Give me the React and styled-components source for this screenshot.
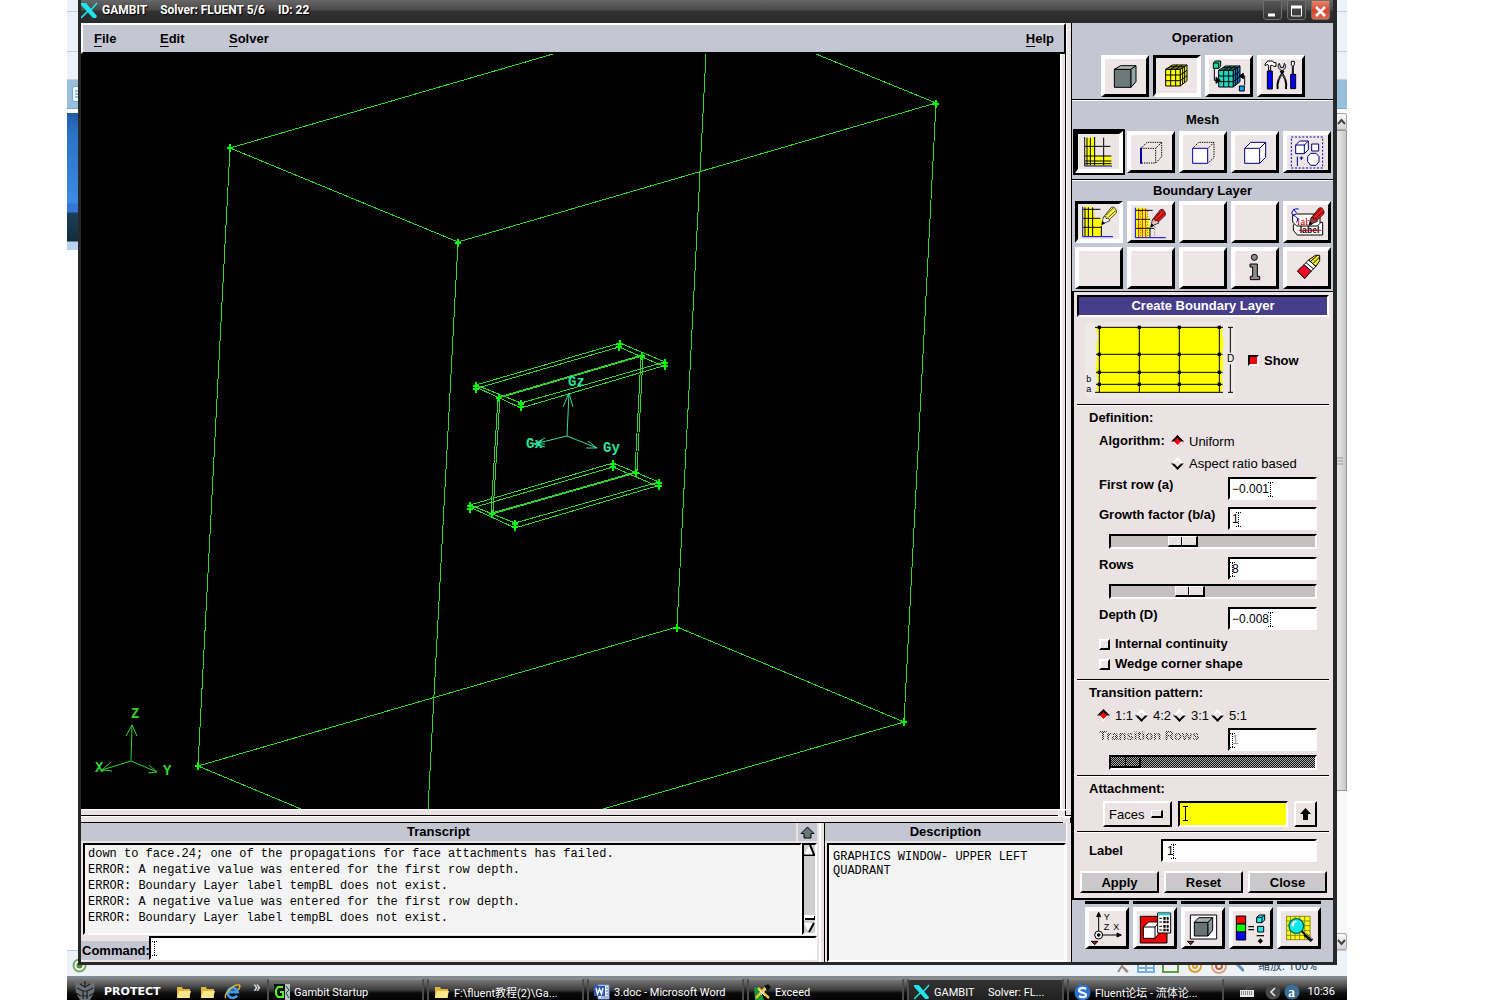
import React from 'react';
import styled, { createGlobalStyle, css } from 'styled-components';

const panel = '#c4c6d2';
const pink = '#ebe3e3';
const uiFont = '"Liberation Sans", Arial, sans-serif';
const monoFont = '"Liberation Mono", "Courier New", monospace';
const shellFont = 'Roboto, "Noto Sans CJK SC", sans-serif';

const GlobalStyle = createGlobalStyle`
  * { box-sizing: border-box; }
  body { margin: 0; background: #fff; overflow: hidden; }
  button, input, select { font: inherit; color: inherit; margin: 0; padding: 0; border-radius: 0; outline: none; }
  svg { display: block; flex: none; }
`;

const raised = css`
  border-style: solid;
  border-color: #fff #000 #000 #fff;
`;
const sunken = css`
  border-style: solid;
  border-color: #000 #fff #fff #000;
`;

const Desktop = styled.div`
  position: relative;
  display: flex;
  flex-direction: column;
  height: 100vh;
  margin: 0 153px 0 67px;
  overflow: hidden;
  font-family: ${uiFont};
  font-size: 13px;
  color: #000;
`;

/* browser window lying behind */
const Backdrop = styled.div`
  position: absolute;
  inset: 0 0 24px 0;
  display: flex;
  flex-direction: column;
  background: #fff;
`;
const BackToolbar = styled.div`
  height: ${({ $h }) => $h}px;
  background: #ecf2f7;
  border-bottom: 1px solid #c3d3de;
`;
const BackTabs = styled.div`
  display: flex;
  justify-content: flex-start;
  align-items: center;
  height: 29px;
  padding-left: 5px;
  background: #98c0db;
  border-bottom: 1px solid #7ba5c4;
`;
const BackPage = styled.div`
  flex: 1;
  display: flex;
  justify-content: space-between;
  padding-top: 4px;
`;
const BackBanner = styled.div`
  width: 60px;
  height: 137px;
  background: linear-gradient(#1f5ba6 0, #2a72c4 20px, #3c8ae4 90px, #3676d6 91px, #3676d6 99px, #1c4058 100px, #142c3c 128px, #b8d2f2 129px);
`;
const BackScroll = styled.div`
  display: flex;
  flex-direction: column;
  width: 17px;
  background: #f8f8f8;
`;
const BackScrollButton = styled.div`
  display: flex;
  justify-content: flex-end;
  align-items: center;
  height: 17px;
  border: 1px solid #a8a8a8;
  border-radius: 2px;
  background: linear-gradient(#fafafa, #d4d4d4);
`;
const BackThumb = styled.div`
  display: flex;
  justify-content: flex-end;
  align-items: center;
  height: 661px;
  border: 1px solid #989898;
  background: linear-gradient(90deg, #f4f4f4, #dedede 60%, #c8c8c8);
`;
const BackTrack = styled.div`
  flex: 1;
`;
const BackStatus = styled.div`
  display: flex;
  justify-content: space-between;
  align-items: center;
  height: 26px;
  padding: 4px 30px 0 5px;
  border-top: 1px solid #b5cbe0;
  background: #ecf2f6;
`;
const BackZoom = styled.div`
  display: flex;
  align-items: center;
  gap: 14px;
  font-family: ${shellFont};
  font-size: 12px;
  line-height: 16px;
  color: #1c4866;
`;

const Window = styled.main`
  position: relative;
  flex: 1;
  min-height: 0;
  display: flex;
  flex-direction: column;
  margin: 0 10px 11px 11px;
  border: solid #26282a;
  border-width: 0 4px 3px 3px;
  background: ${pink};
`;
const TitleBar = styled.header`
  display: flex;
  align-items: center;
  height: 23px;
  padding: 0 3px 3px 0;
  background: linear-gradient(#666 0, #4a4a4a 10px, #323232 11px, #2a2a2a 22px);
  font-family: ${shellFont};
  font-size: 12px;
  font-weight: 700;
  color: #fff;
  text-shadow: 1px 1px 1px #000;
`;
const TitleText = styled.div`
  display: flex;
  flex: 1;
  gap: 13px;
  padding-left: 4px;
  line-height: 20px;
`;
const CaptionButton = styled.button`
  width: 19px;
  height: 20px;
  margin-left: 5px;
  border: 1px solid #6e6e6e;
  border-radius: 0 0 3px 3px;
  background: ${({ $close }) => ($close ? 'linear-gradient(#e88870, #d4452c 50%, #e06848)' : 'linear-gradient(#555, #333)')};
`;
const Client = styled.div`
  flex: 1;
  min-height: 0;
  display: flex;
`;
const Work = styled.div`
  flex: 1;
  min-width: 0;
  display: flex;
  flex-direction: column;
  border-right: 1px solid #000;
`;
const WorkRow = styled.div`
  display: flex;
  ${({ $grow }) => $grow && 'flex: 1; min-height: 0;'}
`;
const Gutter = styled.div`
  width: 5px;
  border-left: 1px solid #fff;
  background: ${pink};
`;
const MenuBar = styled.nav`
  flex: 1;
  display: flex;
  align-items: center;
  height: 31px;
  padding: 0 10px 0 11px;
  border-width: 2px;
  ${sunken}
  border-color: #fff #000 #000 #fff;
  background: ${panel};
  font-weight: 700;
`;
const MenuItem = styled.button`
  border: 0;
  background: none;
  font-weight: 700;
  text-align: left;
  line-height: 18px;
  u { text-underline-offset: 3px; }
  ${({ $w }) => ($w ? `width: ${$w}px;` : 'margin-left: auto;')}
`;
const View = styled.div`
  flex: 1;
  min-width: 0;
  background: #000;
  svg { width: 100%; height: 100%; }
`;
const VSash = styled.div`
  width: 6px;
  border-left: 2px solid #fff;
  border-right: 1px solid #000;
  background: ${pink};
`;
const HSash = styled.div`
  display: flex;
  justify-content: flex-end;
  height: 7px;
  padding-right: ${({ $end }) => $end}px;
  border-top: 1px solid #fff;
  border-bottom: 1px solid #000;
  background: ${pink};
`;
const SashGrip = styled.div`
  width: 8px;
  height: 7px;
  border-width: 1px;
  ${raised}
  background: ${pink};
`;
const Bottom = styled.div`
  display: grid;
  grid-template-columns: 1fr 6px 241px 5px;
  height: 139px;
`;
const Pane = styled.section`
  display: flex;
  flex-direction: column;
  min-width: 0;
`;
const PaneHead = styled.div`
  display: flex;
  height: 20px;
  padding-bottom: 2px;
`;
const PaneTitle = styled.h2`
  flex: 1;
  margin: 0;
  background: ${panel};
  font-size: 13px;
  line-height: 18px;
  text-align: center;
`;
const HeadButton = styled.button`
  display: flex;
  justify-content: center;
  align-items: center;
  width: 19px;
  height: 18px;
  margin: 0 2px;
  border: 0;
  background: ${panel};
`;
const TextBox = styled.div`
  flex: 1;
  min-height: 0;
  overflow: hidden;
  margin-left: 2px;
  padding: ${({ $pad }) => $pad};
  border-width: 2px;
  ${sunken}
  background: #f4f4f4;
  font-family: ${monoFont};
  font-size: 12px;
  line-height: ${({ $line }) => $line}px;
  p { margin: 0; }
`;
const Log = styled.div`
  flex: 1;
  min-height: 0;
  display: flex;
  padding-bottom: 1px;
`;
const LogScroll = styled.div`
  display: flex;
  flex-direction: column;
  justify-content: space-between;
  width: 15px;
  margin-right: 2px;
  border-width: 2px;
  ${sunken}
  background: #cfcfcf;
`;
const CommandRow = styled.div`
  display: flex;
  height: 26px;
  padding: 0 2px 2px 0;
  label {
    flex: none;
    align-self: flex-end;
    width: 68px;
    padding-left: 1px;
    background: ${panel};
    font-weight: 700;
    line-height: 19px;
  }
`;

const Side = styled.aside`
  display: flex;
  flex-direction: column;
  width: 261px;
  background: ${panel};
`;
const Group = styled.section`
  border-bottom: ${({ $last }) => ($last ? 0 : 1)}px solid #000;
  border-top: ${({ $first }) => ($first ? 0 : 1)}px solid #fff;
  padding-bottom: ${({ $pad }) => $pad}px;
  h2 {
    margin: 0;
    padding-top: ${({ $top }) => $top}px;
    font-size: 13px;
    line-height: 20px;
    text-align: center;
  }
`;
const Tools = styled.div`
  display: flex;
  justify-content: center;
  align-items: center;
  gap: 4px;
  padding-top: ${({ $top }) => $top || 0}px;
`;
const Tool = styled.button`
  width: ${({ $small }) => ($small ? 44 : 48)}px;
  height: 42px;
  border-width: ${({ $on }) => ($on ? '3px 4px 4px 3px' : '4px 3px 3px 4px')};
  ${({ $on }) => ($on ? sunken : raised)}
  background: #eee6e6;
`;
const Ring = styled.div`
  margin: -2px;
  border: 2px solid #000;
`;
const Form = styled.form`
  display: flex;
  flex-direction: column;
  padding: 3px 4px 5px 3px;
  border: solid #000;
  border-width: 1px 0 2px 2px;
  background: ${pink};
`;
const FormTitle = styled.h2`
  margin: 0;
  border-width: 2px;
  ${sunken}
  background: #483d8b;
  color: #fff;
  font-size: 13px;
  line-height: 18px;
  text-align: center;
`;
const Preview = styled.div`
  display: flex;
  align-items: center;
  height: 87px;
  padding: 0 8px;
  gap: 13px;
`;
const Rule = styled.hr`
  width: 100%;
  height: 2px;
  margin: 0;
  border: 0;
  border-top: 1px solid #000;
  border-bottom: 1px solid #fff;
`;
const Heading = styled.h3`
  margin: 0;
  padding-left: 12px;
  font-size: 13px;
  line-height: 24px;
`;
const Row = styled.div`
  display: flex;
  align-items: ${({ $align }) => $align || 'center'};
  justify-content: space-between;
  height: ${({ $h }) => $h}px;
  padding: 0 12px 0 ${({ $left }) => ($left === undefined ? 22 : $left)}px;
`;
const FieldLabel = styled.label`
  font-weight: 700;
  line-height: 22px;
  white-space: nowrap;
  ${({ $off }) => $off && css`
    color: transparent;
    background: repeating-conic-gradient(#222 0 25%, ${pink} 0 50%) 0 0 / 2px 2px;
    background-clip: text;
  `}
`;
const FieldBox = styled.div`
  position: relative;
  display: flex;
  width: ${({ $w }) => ($w ? `${$w}px` : '100%')};
  height: ${({ $h }) => $h || 23}px;
  margin-top: ${({ $top }) => $top || 0}px;
  border-width: 2px;
  ${sunken}
  background: ${({ $bg }) => $bg || '#fff'};
  input {
    width: 100%;
    min-width: 0;
    padding-left: ${({ $pad }) => ($pad === undefined ? 2 : $pad)}px;
    border: 0;
    background: none;
    font-size: 12px;
  }
  input:disabled { color: #999; }
`;
const Caret = styled.svg`
  position: absolute;
  top: 3px;
  left: ${({ $x }) => $x}px;
`;
const Radios = styled.div`
  display: flex;
  gap: 5px;
`;
const RadioLabel = styled.label`
  display: flex;
  align-items: center;
  gap: 7px;
  width: ${({ $w }) => $w}px;
  white-space: nowrap;
`;
const Radio = styled.input.attrs({ type: 'radio' })`
  appearance: none;
  flex: none;
  width: 9px;
  height: 9px;
  border-width: 2px;
  ${raised}
  transform: rotate(45deg);
  &:checked {
    border-color: #000 #fff #fff #000;
    background: #f00;
  }
`;
const CheckLabel = styled.label`
  display: flex;
  align-items: center;
  gap: 5px;
  font-weight: 700;
  line-height: 20px;
`;
const Check = styled.input.attrs({ type: 'checkbox' })`
  appearance: none;
  width: 11px;
  height: 11px;
  border-width: 2px;
  ${raised}
  &:checked {
    border-color: #000 #fff #fff #000;
    background: #f00;
  }
`;
const thumb = css`
  width: 30px;
  height: 11px;
  border: solid;
  border-width: 1px 2px 2px 1px;
  border-color: #fff #000 #000 #fff;
  border-radius: 0;
`;
const Slider = styled.input.attrs({ type: 'range' })`
  appearance: none;
  width: 100%;
  height: 15px;
  border-width: 2px;
  ${sunken}
  background: #c6bfbf;
  &::-webkit-slider-thumb {
    appearance: none;
    ${thumb}
    background: linear-gradient(90deg, ${pink} 12px, #000 12px, #000 13px, #fff 13px, #fff 14px, ${pink} 14px);
  }
  &:disabled {
    background: repeating-conic-gradient(#111 0 25%, #aaa 0 50%) 0 0 / 2px 2px;
  }
  &:disabled::-webkit-slider-thumb {
    border-color: transparent #000 #000 transparent;
    background: linear-gradient(90deg, transparent 13px, #000 13px, #000 14px, transparent 14px);
  }
`;
const Pick = styled.div`
  display: flex;
  align-items: center;
  width: 69px;
  height: 26px;
  padding: 0 7px 0 4px;
  border-width: 2px;
  ${raised}
  select {
    appearance: none;
    flex: 1;
    min-width: 0;
    border: 0;
    background: none;
  }
`;
const PickMark = styled.div`
  width: 12px;
  height: 8px;
  border-width: 1px 2px 2px 1px;
  ${raised}
`;
const SmallButton = styled.button`
  display: flex;
  justify-content: center;
  align-items: center;
  width: 23px;
  height: 26px;
  border-width: 2px;
  ${raised}
  background: ${pink};
`;
const Actions = styled.div`
  display: grid;
  grid-template-columns: 1fr 1fr 1fr;
  gap: 5px;
  padding: 9px 2px 0 3px;
`;
const Action = styled.button`
  height: 22px;
  border-width: 2px;
  ${raised}
  background: #cbc9cb;
  font-weight: 700;
`;
const HiddenTools = styled(Tools)`
  margin-bottom: 3px;
  div {
    width: 44px;
    height: 4px;
    border-bottom: 3px solid #000;
  }
`;

const TaskBar = styled.footer`
  position: relative;
  display: flex;
  height: 24px;
  border-top: 2px solid #7f8b92;
  background: linear-gradient(#858585, #4c4c4c 8px, #101010 15px, #000);
  overflow: hidden;
  font-family: ${shellFont};
  font-size: 11px;
  color: #fff;
`;
const Launch = styled.div`
  flex: none;
  display: flex;
  align-items: center;
  gap: 8px;
  width: 200px;
  padding: 5px 0 0 7px;
  strong {
    width: 64px;
    font-family: "DejaVu Sans", sans-serif;
    font-size: 11px;
    line-height: 14px;
  }
  span {
    align-self: flex-start;
    margin-left: 4px;
    font-size: 16px;
    line-height: 8px;
  }
`;
const Tasks = styled.div`
  flex: 1;
  display: grid;
  grid-template-columns: repeat(6, 157px);
  gap: 3px;
`;
const Task = styled.button`
  display: flex;
  align-items: center;
  gap: 4px;
  height: 28px;
  padding: 0 5px;
  border: 2px solid #4b4b4b;
  border-top-color: #8c8c8c;
  border-radius: 3px 3px 0 0;
  background: ${({ $on }) => ($on ? 'linear-gradient(#333, #1c1c1c)' : 'linear-gradient(#777, #3c3c3c 10px, #0a0a0a 13px, #000)')};
  white-space: pre;
`;
const Tray = styled.div`
  flex: none;
  display: flex;
  align-items: center;
  width: 124px;
  padding: 5px 13px 0 15px;
  svg:first-child { margin-right: 11px; }
  svg { margin-right: 3px; }
  span { margin-left: auto; }
`;

// Icons are drawn on a grid of three units per pixel.
const Icon = ({ at: [x, y], w = 120, h = 102, children }) => (
  <svg width={w / 3} height={h / 3} viewBox={`${x} ${y} ${w} ${h}`} fill="none" stroke="#000" strokeWidth="3" aria-hidden="true">
    {children}
  </svg>
);

const MeshCube = ({ x, y, front, side }) => (
  <g strokeWidth="3">
    <path d={`M${x} ${y}h44v50h-44z`} fill={front} />
    <path d={`M${x} ${y}l20-13h44l-20 13z`} fill={front} />
    <path d={`M${x + 44} ${y}l20-13v47l-20 16z`} fill={side} />
    <path d={`M${x + 15} ${y}v50M${x + 30} ${y}v50M${x} ${y + 17}h44l20-14M${x} ${y + 34}h44l20-15M${x + 15} ${y}l20-13M${x + 30} ${y}l20-13`} />
    <path d={`M${x + 7} ${y - 4}h44v48M${x + 14} ${y - 9}h43v48`} />
  </g>
);

const Cube = ({ d = [18, -18], x, y, s = 46, ...rest }) => (
  <g {...rest}>
    <path d={`M${x} ${y}l${d[0]} ${d[1]}h${s}v${s}l${-d[0]} ${-d[1]}`} />
    <path d={`M${x} ${y}h${s}v${s}h${-s}zM${x + s} ${y}l${d[0]} ${d[1]}`} />
  </g>
);

const SolidIcon = () => (
  <Icon at={[135, 178]}>
    <path d="M163 206h50v54h-50z" fill="#6c7a7a" />
    <path d="M163 206l19-11h46l-15 11z" fill="#aebaba" />
    <path d="M213 206l15-11v48l-15 17z" fill="#90a8a8" />
  </Icon>
);
const MeshIcon = () => <Icon at={[291, 178]}><MeshCube x={320} y={209} front="#ff0" side="#ff0" /></Icon>;
const ZonesIcon = () => (
  <Icon at={[447, 178]}>
    <MeshCube x={476} y={209} front="#1ed8c0" side="#1c80d8" />
    <path d="M460 187h16v16h-16zM460 187l6-6h16v16l-6 6" fill="#1ed8a8" />
    <path d="M463 204v35h8M554 254v-28h-10" />
    <path d="M468 230l13 9-13 9zM550 218l-13 8 13 8z" fill="#000" />
    <path d="M538 256h15v15h-15z" fill="#10a0f8" />
  </Icon>
);
const ToolsIcon = () => (
  <Icon at={[603, 178]}>
    <path d="M615 190l8-9h15l3 5h7v11h-7l-4-3h-5v16h-6v-16l-5-3-5 5z" fill="#fff" />
    <path d="M622 211h15v54h-15zM692 221h15v43h-15z" fill="#00f" />
    <path d="M697 220v-24l-3-4v-10h9v10l-3 4v24" fill="#fff" />
    <path d="M658 188c-8 8-2 18 8 23 10-5 15-15 7-23l-3 12h-8z" fill="#ccc" />
    <path d="M662 211c10 16 20 30 16 54M671 211c-10 16-22 30-18 54" strokeWidth="6" />
    <path d="M666 220l13 18M667 220l-13 18" stroke="#fff" strokeWidth="1" />
  </Icon>
);

const LayerIcon = () => (
  <Icon at={[57, 406]}>
    <path d="M78 414h30v56h49v28H78z" fill="#ff0" stroke="none" />
    <path d="M84 414v84M94 414v84M107 412v86M134 414v84M78 440h76M78 469h79M78 484h79M78 492h79" />
    <path d="M77 412v87h82" stroke="#00a" />
  </Icon>
);
const EdgeIcon = () => (
  <Icon at={[213, 406]}>
    <Cube x={243} y={443} s={44} strokeDasharray="4 3" />
    <path d="M243 441v48" stroke="#00a" strokeWidth="6" />
  </Icon>
);
const FaceIcon = () => (
  <Icon at={[369, 406]}>
    <path d="M398 443l18-18h46v46l-18 16M444 443l18-18" strokeDasharray="4 3" />
    <path d="M398 443h45v45h-45z" fill="#fff" stroke="#00a" />
  </Icon>
);
const VolumeIcon = () => <Icon at={[525, 406]}><Cube x={554} y={443} s={45} fill="#fff" stroke="#00007c" /></Icon>;
const GroupIcon = () => (
  <Icon at={[681, 406]}>
    <path d="M694 409h94v93h-94z" stroke="#00a" strokeDasharray="6 5" />
    <g fill="#fff" stroke="#00007c">
      <Cube x={707} y={433} s={26} d={[12, -12]} />
      <path d="M755 430h21v21h-21zM752 458h16l9 10v15l-9 11h-16l-9-11v-15z" />
    </g>
    <path d="M712 468v28M724 467v11M719 472h11" stroke="#00007c" />
  </Icon>
);

const Pencil = ({ fill, nib = '#fff' }) => (
  <g strokeWidth="2">
    <path d="M133 112l24-30 8-1 7 10v8l-25 24-12-1z" fill={fill} />
    <path d="M133 112l-4 20 24-10-6-8-6 2-1-7z" fill={nib} />
    <path d="M128 134l3-10 6 6z" fill="#000" />
    <path d="M141 106l22-22M148 112l22-20" />
  </g>
);
const CreateIcon = () => (
  <Icon at={[57, 75]}>
    <path d="M70 80h30l10 36h18v52H70z" fill="#ff0" stroke="none" />
    <path d="M78 82v86M88 82v86M101 82v86M127 138v30M72 88h52M72 115h52M72 142h56" />
    <path d="M71 80v90h91" stroke="#00f" />
    <Pencil fill="#f8f050" />
  </Icon>
);
const ModifyIcon = () => (
  <Icon at={[213, 75]}>
    <path d="M228 80h28l12 36v54h-40z" fill="#ff0" stroke="none" />
    <path d="M236 82v86M247 82v86M257 82v86" stroke="#e02020" />
    <path d="M228 88h50M228 115h42M228 142h54M270 140v28" />
    <path d="M242 90v78M263 90v78M284 128v40" stroke="#666" strokeDasharray="3 5" />
    <path d="M226 80v90h91" stroke="#00f" />
    <g transform="translate(144 4)"><Pencil fill="#f01818" nib="#f0c0c0" /></g>
  </Icon>
);
const LabelIcon = () => (
  <Icon at={[681, 75]}>
    <path d="M700 132l8-8h80v38h-76l-12-14z" fill="#fff" />
    <text x="719" y="157" fill="#000" stroke="none" fontFamily="Liberation Sans" fontSize="26" fontWeight="700">label</text>
    <path d="M716 148h68" stroke="#e00000" />
    <path d="M698 103l12-4h64l6 8v20l-8 8h-62l-12-12z" fill="#fff" />
    <path d="M716 84c-20-4-26 16-14 20s14 16 6 20M700 84l10 12" stroke="#00d" />
    <text x="711" y="132" fill="#c00" stroke="none" fontFamily="Liberation Serif" fontSize="34">lab</text>
    <g transform="translate(620 -1)"><Pencil fill="#f01818" nib="#a04040" /></g>
  </Icon>
);
const InfoIcon = () => (
  <Icon at={[525, 213]}>
    <circle cx="583" cy="229" r="9" fill="#8c8c8c" />
    <path d="M570 249h22v37h7v10h-28v-10h7v-28h-8z" fill="#8c8c8c" />
  </Icon>
);
const EraserIcon = () => (
  <Icon at={[681, 213]}>
    <path d="M712 270l20-19 22 19-20 23z" fill="#f00828" />
    <path d="M732 251l14-14 22 19-14 14z" fill="#fff" />
    <path d="M746 237l20-14h13v16l-11 17z" fill="#f4ec30" />
    <path d="M738 245l23 19M753 240l18-16M761 246l18-18" />
  </Icon>
);

const AxesIcon = () => (
  <Icon at={[87, 274]} w={108}>
    <path d="M116 343V286M116 343h56" />
    <path d="M116 275l6 13h-12zM184 343l-13-6v12z" fill="#000" />
    <circle cx="116" cy="343" r="12" fill="#eee" /><circle cx="116" cy="343" r="4" fill="#000" />
    <path d="M94 362h20l-10 10z" fill="#a01818" />
    <g fill="#000" stroke="none" fontFamily="Liberation Sans" fontSize="27">
      <text x="131" y="299">Y</text><text x="131" y="329">Z</text><text x="160" y="329">X</text>
    </g>
  </Icon>
);
const DisplayIcon = () => (
  <Icon at={[231, 274]} w={108}>
    <path d="M241 287h80v80h-80z" fill="#f00000" />
    <path d="M250 319l16-15h32v32l-13 17h-35zM250 319h35v34M285 319l13-15" fill="#fff" />
    <path d="M293 277h39v60h-39z" fill="#fff" /><path d="M294 281h37" stroke="#10d8d8" strokeWidth="6" />
    <path d="M298 293h8M298 304h8M298 317h8M298 328h8" />
    <path d="M310 293h16M310 304h16M310 317h16M310 328h16" strokeWidth="8" strokeDasharray="7 3" />
    <path d="M310 304h16M310 328h16" stroke="#c02020" strokeWidth="3" strokeDasharray="3 5" />
  </Icon>
);
const ShadeIcon = () => (
  <Icon at={[375, 274]} w={108}>
    <path d="M391 283h79v72h-79z" fill="#fff" />
    <path d="M403 305h41v41h-41z" fill="#687474" />
    <path d="M403 305l13-14h42l-14 14z" fill="#a4b0b0" />
    <path d="M444 305l14-14v38l-14 17z" fill="#889898" />
    <path d="M382 362h20l-10 10z" fill="#a01818" />
  </Icon>
);
const ColorIcon = () => (
  <Icon at={[519, 274]} w={108}>
    <path d="M529 286h28v24h-28z" fill="#f00" /><path d="M529 310h28v24h-28z" fill="#0f0" /><path d="M529 334h28v24h-28z" fill="#00f" />
    <path d="M565 318h17M565 327h17" strokeWidth="4" />
    <path d="M590 290h16v16h-16zM590 290l8-7h16v15l-8 8M606 290l8-7M593 317h18v17h-18z" fill="#20e8f0" />
    <path d="M590 345h22" strokeWidth="4" />
    <path d="M601 353l8 8-8 8-8-8z" fill="#000" stroke="none" />
  </Icon>
);
const ZoomIcon = () => (
  <Icon at={[663, 274]} w={108}>
    <path d="M679 286h72v72h-72z" fill="#ff0" stroke="none" />
    <path d="M680 286v72M692 286v72M705 286v72M719 286v72M734 286v72M750 286v72M679 287h72M679 301h72M679 315h72M679 330h72M679 344h72M679 357h72" stroke="#8a8a30" />
    <circle cx="709" cy="316" r="22" fill="#10e8f0" stroke="#065" strokeWidth="4" />
    <path d="M694 314c2-12 12-16 18-12-8 4-12 10-10 18z" fill="#fff" stroke="none" />
    <path d="M725 332l10 9" strokeWidth="6" /><path d="M734 341l22 19" strokeWidth="11" /><path d="M736 338l20 17" stroke="#aaa" />
  </Icon>
);

const LayerDiagram = () => (
  <Icon at={[75, 432]} w={450} h={225}>
    <path d="M75 432h450v225H75z" fill="#eee8e6" stroke="none" />
    <path d="M108 444h380l-2 22 5 20-4 38 3 30-4 40 3 20-5 26H110l2-38-5-32 4-38-2-28 5-26z" fill="#ff0" stroke="none" />
    <path d="M118 444v196M238 444v196M358 444v196M478 444v196M105 445h384M108 526h380M108 580h380M108 616h380M105 640h384" />
    <g fill="#000" strokeWidth="2">
      {[118, 238, 358, 478].map(x => [445, 526, 580, 616].map(y => (
        <rect key={`${x}-${y}`} x={x - 4} y={y - 4} width="8" height="8" />
      )))}
    </g>
    <path d="M504 445h15M504 640h15M511 445v76M511 556v84" />
    <g fill="#000" stroke="none" fontFamily="Liberation Sans" fontSize="27">
      <text x="501" y="550" fontSize="30">D</text><text x="79" y="608">b</text><text x="79" y="640">a</text>
    </g>
  </Icon>
);

const Logo = ({ size = 17 }) => (
  <svg width={size} height={size} viewBox="0 0 17 17" aria-hidden="true">
    <path d="M0 1h5l11 13-1 2h-3L0 3z" fill="#1fe4ec" />
    <path d="M16 1L9 9M7 9l-7 7" stroke="#1fe4ec" strokeWidth="1.6" />
  </svg>
);
const Folder = () => (
  <svg width="16" height="14" viewBox="0 0 16 14" aria-hidden="true">
    <path d="M1 2h5l1 2h7v9H1z" fill="#e2b53a" /><path d="M3 6h12l-2 7H1z" fill="#fbe68a" />
  </svg>
);
const Explorer = () => (
  <svg width="17" height="17" viewBox="0 0 17 17" fill="none" aria-hidden="true">
    <path d="M13 12.5A5 5 0 1 1 13.6 9H5" stroke="#3a9cf0" strokeWidth="2.8" />
    <path d="M2 15C-1 12 9 1 15 2c2 1 0 4-1 5" stroke="#e8b830" strokeWidth="1.4" />
  </svg>
);
const Robot = () => (
  <svg width="22" height="21" viewBox="0 0 22 21" aria-hidden="true">
    <path d="M1 0l5 3h10l5-3-1 12-4 7-5 2-5-2-4-7z" fill="#6a7074" />
    <path d="M6 3l5 3 5-3M3 7l6 3v8M19 7l-6 3v8M9 10h4M8 15h6M2 12l5 3M20 12l-5 3M11 0v5" stroke="#1c1e20" strokeWidth="1.2" fill="none" />
  </svg>
);
const GambitIcon = () => (
  <svg width="16" height="16" viewBox="0 0 16 16" aria-hidden="true">
    <path d="M0 0h12v14H0z" fill="#0a1408" /><path d="M11 0h5v16h-5z" fill="#b4c4c0" /><path d="M12 2l3 4-3 3 3 5" stroke="#245" fill="none" />
    <path d="M9 3H4L2 6v4l2 3h5V8H6" stroke="#5cf02c" strokeWidth="2" fill="none" />
  </svg>
);
const WordIcon = () => (
  <svg width="16" height="16" viewBox="0 0 16 16" aria-hidden="true">
    <path d="M4 1h11v14H4z" fill="#e4ecfa" stroke="#7090d0" /><path d="M12 4h2M12 7h2M12 10h2M7 13h7" stroke="#5078c0" />
    <path d="M0 2h11v10H0z" fill="#2c58b8" /><path d="M2 4l1.500 6 2-5 2 5L9 4" stroke="#fff" strokeWidth="1.400" fill="none" />
  </svg>
);
const ExceedIcon = () => (
  <svg width="17" height="16" viewBox="0 0 17 16" aria-hidden="true">
    <path d="M0 3l6 1 4 12H1z" fill="#1d9438" /><path d="M14 1L2 14M4 4l11 10" stroke="#f0c83c" strokeWidth="2.4" />
    <path d="M5 6l6 6M12 5l-5 6" stroke="#fff" strokeWidth="1" /><path d="M10 2l4-2 3 3-3 4z" fill="#101010" />
  </svg>
);
const SogouIcon = () => (
  <svg width="17" height="17" viewBox="0 0 17 17" aria-hidden="true">
    <circle cx="8.500" cy="8.500" r="8" fill="#2a74d0" />
    <path d="M12 5C9 3 5 4 5 6.500S12 8.500 12 11s-4 3-7 1" stroke="#fff" strokeWidth="2.200" fill="none" />
  </svg>
);

const outer = [
  'M230 148L458 242L936 103', 'M230 148L553 54', 'M936 103L816 54', 'M706 54L677 627', 'M230 148L198 766',
  'M458 242L428 809', 'M936 103L904 722', 'M198 766L677 627L904 722', 'M198 766L301 809', 'M904 722L603 809',
];
const inner = [
  'M476 385L620 343L665 362L521 403z', 'M478 388L619 347L663 366L521 408z', 'M499 397L642 355M499 398L642 356',
  'M498 397L491 513M500 397L493 513', 'M641 356L635 471M643 356L637 471',
  'M470 505L613 463L659 482L515 523z', 'M472 508L613 467L657 486L515 528z', 'M492 513L636 472M492 514L636 473',
];
const points = [
  [230, 147], [458, 242], [936, 103], [198, 765], [904, 721], [677, 627],
  [476, 385], [476, 388], [620, 343], [619, 346], [665, 362], [665, 365], [521, 403], [521, 406], [499, 397], [642, 355],
  [470, 505], [470, 508], [613, 463], [613, 466], [659, 482], [659, 485], [515, 523], [515, 526], [492, 513], [636, 472],
];

const Scene = () => (
  <svg viewBox="81 54 979 755" preserveAspectRatio="xMidYMid meet" fill="none" role="img" aria-label="Wireframe model">
    <g stroke="#32d232" shapeRendering="crispEdges">
      {[...outer, ...inner].map(d => <path key={d} d={d} />)}
    </g>
    <g stroke="#00ff00" strokeWidth="2" shapeRendering="crispEdges">
      {points.map(([x, y]) => <path key={`${x}-${y}`} d={`M${x - 3} ${y + 1}h6M${x} ${y - 3}v8`} />)}
    </g>
    <g stroke="#3cdc9c">
      <path d="M567 436l2-43M563 407l6-14 4 14M567 436l30 12M588 441l9 7h-11M567 436l-33 8M545 438l-11 6 11 3M537 444h8" />
    </g>
    <g stroke="#32d232">
      <path d="M131 761l1-36M126 736l6-11 5 11M131 761l26 11M149 765l8 7-9 1M131 761l-29 9M111 762l-9 8 10 1" />
    </g>
    <g fontFamily="Liberation Mono" fontSize="14" fontWeight="700" fill="#2ae49c">
      <text x="568" y="386">Gz</text><text x="603" y="452">Gy</text><text x="526" y="448">Gx</text>
    </g>
    <g fontFamily="Liberation Mono" fontSize="14" fontWeight="700" fill="#32d232">
      <text x="131" y="718">Z</text><text x="163" y="775">Y</text><text x="95" y="772">X</text>
    </g>
  </svg>
);

const Beam = ({ x, solid }) => (
  <Caret $x={x} width="5" height="15" viewBox="0 0 5 15" stroke="#000" shapeRendering="crispEdges" aria-hidden="true">
    <path d="M0 .5h5M0 14.500h5M2.500 1v13" strokeDasharray={solid ? undefined : '1 1'} />
  </Caret>
);

const Field = ({ id, label, value, caret, off }) => (
  <Row $h={30} $align="flex-start">
    <FieldLabel htmlFor={id} $off={off}>{label}</FieldLabel>
    <FieldBox $w={89} $top={3}>
      <input id={id} defaultValue={value} disabled={off} />
      <Beam x={caret} />
    </FieldBox>
  </Row>
);

const SliderRow = ({ label, value, off }) => (
  <Row $h={20} $left={32} $align="flex-start">
    <Slider aria-label={label} defaultValue={value} disabled={off} />
  </Row>
);

const log = [
  'down to face.24; one of the propagations for face attachments has failed.',
  'ERROR: A negative value was entered for the first row depth.',
  'ERROR: Boundary Layer label tempBL does not exist.',
  'ERROR: A negative value was entered for the first row depth.',
  'ERROR: Boundary Layer label tempBL does not exist.',
];

const tasks = [
  { icon: <GambitIcon />, text: 'Gambit Startup' },
  { icon: <Folder />, text: 'F:\\fluent教程(2)\\Ga...' },
  { icon: <WordIcon />, text: '3.doc - Microsoft Word' },
  { icon: <ExceedIcon />, text: 'Exceed' },
  { icon: <Logo size={16} />, text: 'GAMBIT     Solver: FL...', on: true },
  { icon: <SogouIcon />, text: 'Fluent论坛 - 流体论...' },
];

const BoundaryForm = () => (
  <Form onSubmit={e => e.preventDefault()}>
    <FormTitle>Create Boundary Layer</FormTitle>
    <Preview>
      <LayerDiagram />
      <CheckLabel><Check defaultChecked />Show</CheckLabel>
    </Preview>
    <Rule />
    <Heading>Definition:</Heading>
    <Row $h={22}>
      <FieldLabel as="span">Algorithm:</FieldLabel>
      <RadioLabel $w={144}><Radio name="algorithm" defaultChecked />Uniform</RadioLabel>
    </Row>
    <Row $h={22} $left={96}>
      <RadioLabel $w={144}><Radio name="algorithm" />Aspect ratio based</RadioLabel>
    </Row>
    <Field id="first" label="First row (a)" value="−0.001" caret={38} />
    <Field id="growth" label="Growth factor (b/a)" value="1" caret={6} />
    <SliderRow label="Growth factor" value={33} />
    <Field id="rows" label="Rows" value="8" caret={0} />
    <SliderRow label="Rows" value={37} />
    <Field id="depth" label="Depth (D)" value="−0.008" caret={38} />
    <Row $h={20}><CheckLabel><Check />Internal continuity</CheckLabel></Row>
    <Row $h={25} $align="flex-start"><CheckLabel><Check />Wedge corner shape</CheckLabel></Row>
    <Rule />
    <Heading>Transition pattern:</Heading>
    <Row $h={20}>
      <Radios>
        {['1:1', '4:2', '3:1', '5:1'].map((p, i) => (
          <RadioLabel key={p} $w={33}><Radio name="pattern" defaultChecked={i === 0} />{p}</RadioLabel>
        ))}
      </Radios>
    </Row>
    <Field id="trows" label="Transition Rows" value="1" caret={0} off />
    <SliderRow label="Transition rows" value={0} off />
    <Rule />
    <Heading>Attachment:</Heading>
    <Row $h={30} $left={26} $align="flex-start">
      <Pick>
        <select aria-label="Attachment type"><option>Faces</option></select>
        <PickMark />
      </Pick>
      <FieldBox $w={110} $h={26} $bg="#ff0">
        <input aria-label="Attached faces" />
        <Beam x={3} solid />
      </FieldBox>
      <SmallButton type="button" aria-label="Pick list">
        <svg width="11" height="12" viewBox="0 0 11 12"><path d="M5.500 0L11 6H8v6H3V6H0z" /></svg>
      </SmallButton>
    </Row>
    <Rule />
    <Row $h={29} $left={12} $align="flex-end">
      <FieldLabel htmlFor="label">Label</FieldLabel>
      <FieldBox $w={156} $pad={4}>
        <input id="label" defaultValue="1" />
        <Beam x={8} />
      </FieldBox>
    </Row>
    <Actions>
      <Action type="submit">Apply</Action>
      <Action type="button">Reset</Action>
      <Action type="button">Close</Action>
    </Actions>
  </Form>
);

const App = () => (
  <>
    <GlobalStyle />
    <Desktop>
      <Backdrop>
        <BackToolbar $h={12} />
        <BackToolbar $h={40} />
        <BackToolbar $h={28} />
        <BackTabs>
          <svg width="11" height="16" viewBox="0 0 11 16"><rect x=".5" y=".5" width="14" height="15" rx="2" fill="#eef6fc" stroke="#6aa4d4" /><path d="M3 5h8M3 8h8M3 11h8" stroke="#3c8ac8" /></svg>
        </BackTabs>
        <BackPage>
          <BackBanner />
          <BackScroll>
            <BackScrollButton>
              <svg width="9" height="8" viewBox="0 0 9 8"><path d="M1 6l3.500-4L8 6" stroke="#444" strokeWidth="2" fill="none" /></svg>
            </BackScrollButton>
            <BackThumb>
              <svg width="9" height="8" viewBox="0 0 9 8"><path d="M0 1h6M0 4h6M0 7h6" stroke="#999" /></svg>
            </BackThumb>
            <BackTrack />
            <BackScrollButton>
              <svg width="9" height="8" viewBox="0 0 9 8"><path d="M1 2l3.500 4L8 2" stroke="#444" strokeWidth="2" fill="none" /></svg>
            </BackScrollButton>
          </BackScroll>
        </BackPage>
        <BackStatus>
          <svg width="15" height="15" viewBox="0 0 15 15"><circle cx="7.500" cy="7.500" r="6" fill="#f4faf0" stroke="#7ca868" strokeWidth="2" /><circle cx="7.500" cy="7.500" r="3" fill="#4c8c34" /></svg>
          <BackZoom>
            <svg width="128" height="16" viewBox="0 0 128 16" fill="none" strokeWidth="2">
              <path d="M2 14l4-6 5 6M8 10l4 4" stroke="#a08878" />
              <path d="M22 6v8h16V6M30 6v8M22 10h16" stroke="#78b0e0" />
              <path d="M47 6v8h15V6" stroke="#60a040" />
              <circle cx="79" cy="8" r="6" stroke="#e0a030" /><circle cx="79" cy="8" r="2" stroke="#e0a030" />
              <circle cx="103" cy="8" r="7" stroke="#e0a080" /><circle cx="103" cy="8" r="3" stroke="#c06040" />
              <path d="M121 6l7 7" stroke="#6090c8" strokeWidth="3" />
            </svg>
            缩放: 100%
          </BackZoom>
        </BackStatus>
      </Backdrop>

      <Window>
        <TitleBar>
          <Logo />
          <TitleText><span>GAMBIT</span><span>Solver: FLUENT 5/6</span><span>ID: 22</span></TitleText>
          <CaptionButton aria-label="Minimize"><svg width="17" height="17" viewBox="0 0 17 17"><path d="M4 13h7" stroke="#fff" strokeWidth="3" /></svg></CaptionButton>
          <CaptionButton aria-label="Maximize"><svg width="17" height="17" viewBox="0 0 17 17" fill="none" stroke="#fff"><path d="M3.500 5v9h10V5" /><path d="M3 5h11" strokeWidth="3" /></svg></CaptionButton>
          <CaptionButton $close aria-label="Close window"><svg width="17" height="17" viewBox="0 0 17 17"><path d="M4 5l9 9M13 5l-9 9" stroke="#fff" strokeWidth="2.500" /></svg></CaptionButton>
        </TitleBar>
        <Client>
          <Work>
            <WorkRow>
              <MenuBar>
                <MenuItem $w={66}><u>F</u>ile</MenuItem>
                <MenuItem $w={69}><u>E</u>dit</MenuItem>
                <MenuItem $w={60}><u>S</u>olver</MenuItem>
                <MenuItem><u>H</u>elp</MenuItem>
              </MenuBar>
              <Gutter />
            </WorkRow>
            <WorkRow $grow>
              <View><Scene /></View>
              <VSash />
              <Gutter />
            </WorkRow>
            <HSash $end={5}><SashGrip /></HSash>
            <HSash $end={0}><SashGrip /></HSash>
            <Bottom>
              <Pane>
                <PaneHead>
                  <PaneTitle>Transcript</PaneTitle>
                  <HeadButton aria-label="Expand transcript">
                    <svg width="15" height="13" viewBox="0 0 15 13"><path d="M7.500 1L14 7.500h-3V12H4V7.500H1z" fill="#6a7676" stroke="#000" /></svg>
                  </HeadButton>
                </PaneHead>
                <Log>
                  <TextBox $pad="1px 3px" $line={16}>{log.map((line, i) => <p key={i}>{line}</p>)}</TextBox>
                  <LogScroll>
                    <svg width="11" height="11" viewBox="0 0 11 11"><path d="M5.500 0L0 10h10z" fill="#fff" /><path d="M6 0l4.500 10.500H0" stroke="#000" strokeWidth="2" fill="none" /></svg>
                    <svg width="11" height="18" viewBox="0 0 11 18"><path d="M0 0h11v4H0zM0 8h10L5 17z" fill="#fff" /><path d="M1 4h10V1M10 8L5 17" stroke="#000" strokeWidth="2" fill="none" /></svg>
                  </LogScroll>
                </Log>
                <CommandRow>
                  <label htmlFor="command">Command:</label>
                  <FieldBox $h={24}>
                    <input id="command" />
                    <Beam x={1} />
                  </FieldBox>
                </CommandRow>
              </Pane>
              <VSash />
              <Pane>
                <PaneHead><PaneTitle>Description</PaneTitle></PaneHead>
                <TextBox $pad="5px 4px" $line={14}>GRAPHICS WINDOW- UPPER LEFT QUADRANT</TextBox>
              </Pane>
              <Gutter />
            </Bottom>
          </Work>

          <Side>
            <Group $first $top={5} $pad={2}>
              <h2>Operation</h2>
              <Tools $top={7}>
                <Tool aria-label="Geometry"><SolidIcon /></Tool>
                <Tool $on aria-label="Mesh"><MeshIcon /></Tool>
                <Tool aria-label="Zones"><ZonesIcon /></Tool>
                <Tool aria-label="Tools"><ToolsIcon /></Tool>
              </Tools>
            </Group>
            <Group $top={9} $pad={6}>
              <h2>Mesh</h2>
              <Tools $top={1}>
                <Ring><Tool $on aria-label="Boundary layer"><LayerIcon /></Tool></Ring>
                <Tool aria-label="Edge"><EdgeIcon /></Tool>
                <Tool aria-label="Face"><FaceIcon /></Tool>
                <Tool aria-label="Volume"><VolumeIcon /></Tool>
                <Tool aria-label="Group"><GroupIcon /></Tool>
              </Tools>
            </Group>
            <Group $last $top={0} $pad={2}>
              <h2>Boundary Layer</h2>
              <Tools>
                <Tool $on aria-label="Create"><CreateIcon /></Tool>
                <Tool aria-label="Modify"><ModifyIcon /></Tool>
                <Tool aria-label="Empty" />
                <Tool aria-label="Empty" />
                <Tool aria-label="Label"><LabelIcon /></Tool>
              </Tools>
              <Tools $top={4}>
                <Tool aria-label="Empty" />
                <Tool aria-label="Empty" />
                <Tool aria-label="Empty" />
                <Tool aria-label="Summarize"><InfoIcon /></Tool>
                <Tool aria-label="Delete"><EraserIcon /></Tool>
              </Tools>
            </Group>
            <BoundaryForm />
            <HiddenTools><div /><div /><div /><div /><div /></HiddenTools>
            <Tools>
              <Tool $small aria-label="Orient"><AxesIcon /></Tool>
              <Tool $small aria-label="Display attributes"><DisplayIcon /></Tool>
              <Tool $small aria-label="Render"><ShadeIcon /></Tool>
              <Tool $small aria-label="Color mode"><ColorIcon /></Tool>
              <Tool $small aria-label="Examine"><ZoomIcon /></Tool>
            </Tools>
          </Side>
        </Client>
      </Window>

      <TaskBar>
        <Launch>
          <Robot /><strong>PROTECT</strong><Folder /><Folder /><Explorer /><span>»</span>
        </Launch>
        <Tasks>
          {tasks.map(t => <Task key={t.text} $on={t.on}>{t.icon}{t.text}</Task>)}
        </Tasks>
        <Tray>
          <svg width="15" height="13" viewBox="0 0 15 13"><path d="M1 5h14v7H1z" fill="#e8e8e8" /><path d="M2 7h12M2 9h12" stroke="#222" strokeDasharray="1 1" /><path d="M7 5V3h6V0" stroke="#555" fill="none" /></svg>
          <svg width="16" height="16" viewBox="0 0 16 16"><circle cx="8" cy="8" r="7.500" fill="#484848" /><path d="M10 4L6 8l4 4" stroke="#eee" strokeWidth="1.500" fill="none" /></svg>
          <svg width="16" height="16" viewBox="0 0 16 16"><circle cx="8" cy="8" r="7.500" fill="#3c6c98" /><text x="4" y="13" fontSize="14" fontWeight="700" fill="#fff" fontFamily="Liberation Serif">a</text></svg>
          <span>10:36</span>
        </Tray>
      </TaskBar>
    </Desktop>
  </>
);

export default App;
